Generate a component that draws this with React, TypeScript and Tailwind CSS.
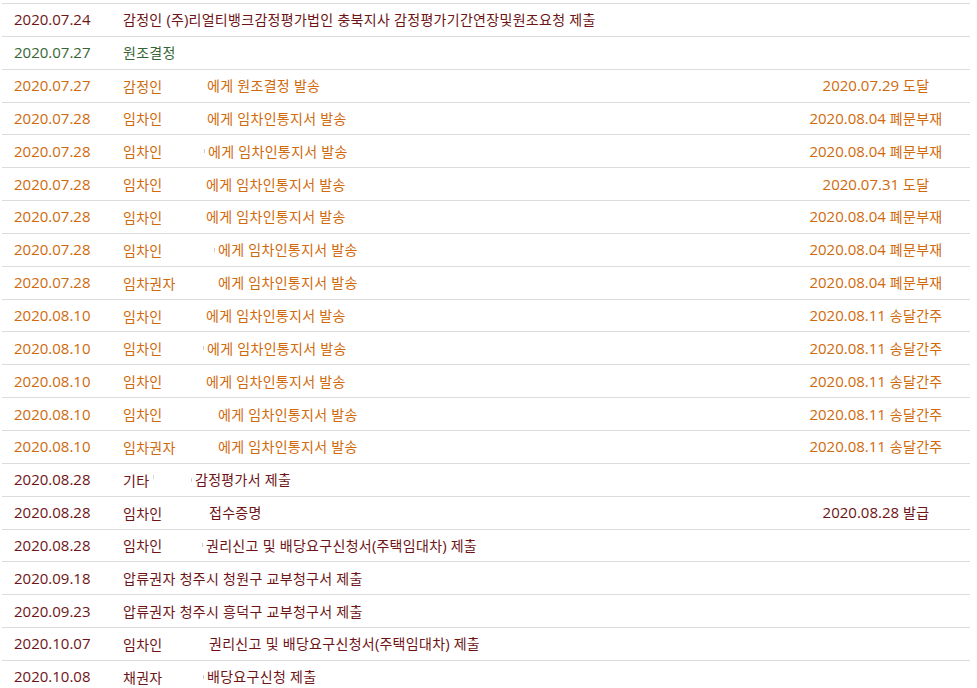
import React from 'react';

type Row = {
  date: string;
  tone: 'red' | 'green' | 'orange';
  party?: string;
  partyW?: string;
  mark?: boolean;
  extraMark?: boolean;
  text: string;
  right?: string;
};

const rows: Row[] = [
  { date: '2020.07.24', tone: 'red', text: '감정인 (주)리얼티뱅크감정평가법인 충북지사 감정평가기간연장및원조요청 제출' },
  { date: '2020.07.27', tone: 'green', text: '원조결정' },
  { date: '2020.07.27', tone: 'orange', party: '감정인', partyW: 'w-[84px]', text: '에게 원조결정 발송', right: '2020.07.29 도달' },
  { date: '2020.07.28', tone: 'orange', party: '임차인', partyW: 'w-[84px]', text: '에게 임차인통지서 발송', right: '2020.08.04 폐문부재' },
  { date: '2020.07.28', tone: 'orange', party: '임차인', partyW: 'w-[81px]', mark: true, text: '에게 임차인통지서 발송', right: '2020.08.04 폐문부재' },
  { date: '2020.07.28', tone: 'orange', party: '임차인', partyW: 'w-[83px]', text: '에게 임차인통지서 발송', right: '2020.07.31 도달' },
  { date: '2020.07.28', tone: 'orange', party: '임차인', partyW: 'w-[83px]', text: '에게 임차인통지서 발송', right: '2020.08.04 폐문부재' },
  { date: '2020.07.28', tone: 'orange', party: '임차인', partyW: 'w-[91px]', mark: true, text: '에게 임차인통지서 발송', right: '2020.08.04 폐문부재' },
  { date: '2020.07.28', tone: 'orange', party: '임차권자', partyW: 'w-[95px]', text: '에게 임차인통지서 발송', right: '2020.08.04 폐문부재' },
  { date: '2020.08.10', tone: 'orange', party: '임차인', partyW: 'w-[83px]', text: '에게 임차인통지서 발송', right: '2020.08.11 송달간주' },
  { date: '2020.08.10', tone: 'orange', party: '임차인', partyW: 'w-[80px]', mark: true, text: '에게 임차인통지서 발송', right: '2020.08.11 송달간주' },
  { date: '2020.08.10', tone: 'orange', party: '임차인', partyW: 'w-[83px]', text: '에게 임차인통지서 발송', right: '2020.08.11 송달간주' },
  { date: '2020.08.10', tone: 'orange', party: '임차인', partyW: 'w-[95px]', text: '에게 임차인통지서 발송', right: '2020.08.11 송달간주' },
  { date: '2020.08.10', tone: 'orange', party: '임차권자', partyW: 'w-[95px]', text: '에게 임차인통지서 발송', right: '2020.08.11 송달간주' },
  { date: '2020.08.28', tone: 'red', party: '기타', partyW: 'w-[68px]', mark: true, extraMark: true, text: '감정평가서 제출' },
  { date: '2020.08.28', tone: 'red', party: '임차인', partyW: 'w-[86px]', text: '접수증명', right: '2020.08.28 발급' },
  { date: '2020.08.28', tone: 'red', party: '임차인', partyW: 'w-[79px]', mark: true, text: '권리신고 및 배당요구신청서(주택임대차) 제출' },
  { date: '2020.09.18', tone: 'red', text: '압류권자 청주시 청원구 교부청구서 제출' },
  { date: '2020.09.23', tone: 'red', text: '압류권자 청주시 흥덕구 교부청구서 제출' },
  { date: '2020.10.07', tone: 'red', party: '임차인', partyW: 'w-[86px]', text: '권리신고 및 배당요구신청서(주택임대차) 제출' },
  { date: '2020.10.08', tone: 'red', party: '채권자', partyW: 'w-[80px]', mark: true, text: '배당요구신청 제출' },
];

const toneClass = {
  red: 'text-[#6e1416]',
  green: 'text-[#376634]',
  orange: 'text-[#d06a0c]',
};

const HANGUL = /([\uAC00-\uD7A3]+)/;
const IS_HANGUL = /^[\uAC00-\uD7A3]+$/;

// 한글은 14px, 숫자/기호는 15px 로 그려서 원본 폰트 폭에 맞춤
const Txt = ({ s }: { s: string }) => (
  <>
    {s.split(HANGUL).map((p, i) =>
      IS_HANGUL.test(p) ? (
        <span key={i} className="font-['Noto_Sans_CJK_KR',sans-serif] text-[14px] tracking-[0.3px]">{p}</span>
      ) : (
        <span key={i}>{p}</span>
      )
    )}
  </>
);

const Mark = () => <span className="inline-block w-px h-[4px] mr-[3px] bg-[#d4cbc4] align-middle" />;

export default function App() {
  return (
    <div className="w-[977px] h-[688px] overflow-hidden bg-white pt-[3px] pl-[2px]">
      <div className="w-[968px] font-['Open_Sans','Noto_Sans_CJK_KR',sans-serif] text-[15px] leading-none">
        {rows.map((r, i) => (
          <div key={i} className={`flex items-center h-[32.85px] border-t border-[#dcdcdc] ${toneClass[r.tone]}`}>
            <div className="w-[121px] pl-3 shrink-0 whitespace-nowrap">{r.date}</div>
            <div className="flex-1 flex items-center whitespace-nowrap">
              {r.party && (
                <span className={`${r.partyW} shrink-0 inline-flex items-center`}>
                  <Txt s={r.party} />
                  {r.extraMark && <span className="inline-block w-px h-[4px] ml-[4px] -mt-[6px] bg-[#dcd6d6]" />}
                </span>
              )}
              {r.mark && <Mark />}
              <span><Txt s={r.text} /></span>
            </div>
            <div className="w-[188px] shrink-0 text-center whitespace-nowrap">
              {r.right && <Txt s={r.right} />}
            </div>
          </div>
        ))}
      </div>
    </div>
  );
}
